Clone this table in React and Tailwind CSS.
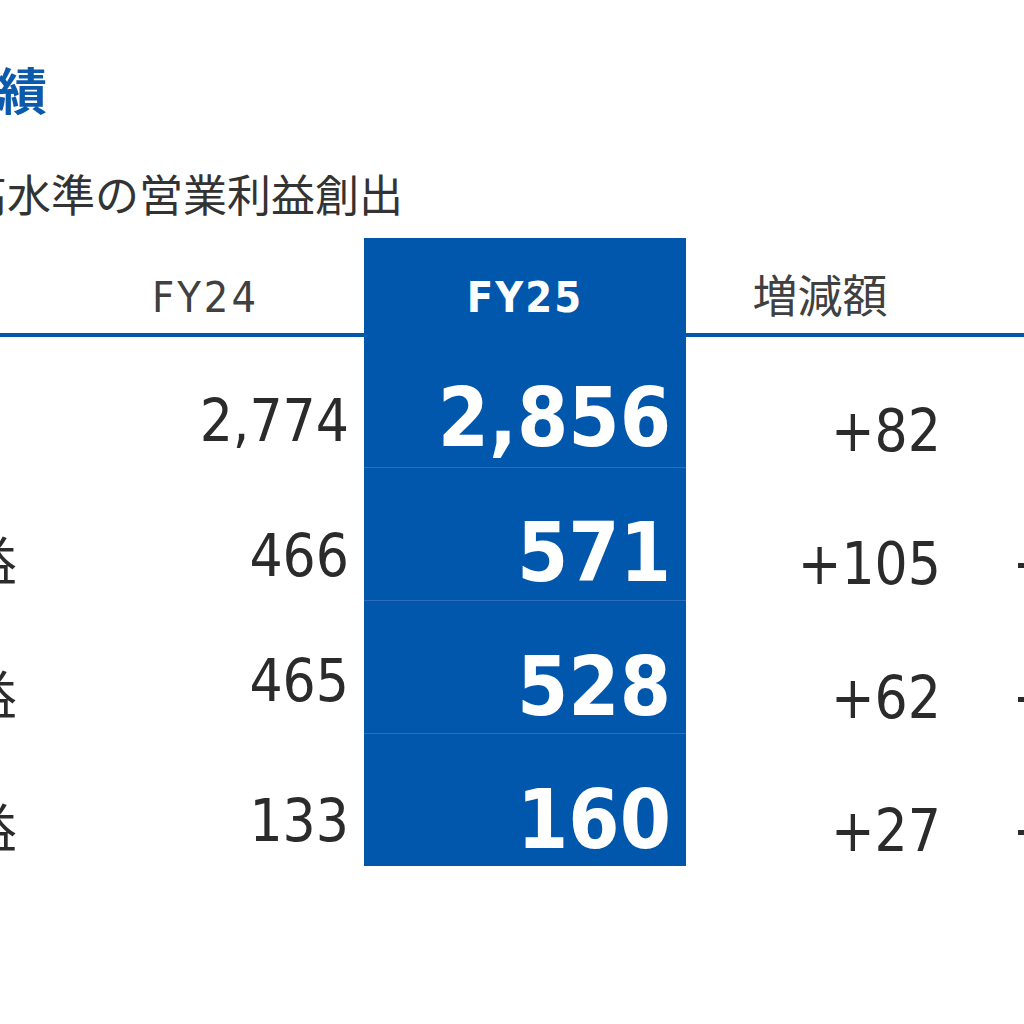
import React from 'react';

const rows = [
    { label: '売上高', fy24: '2,774', fy25: '2,856', diff: '+82', pct: '+3.0%', h: 'h-[131px]', lp: 'pt-[65px]', ap: 'pt-[55px]', bp: 'pt-[40px]', cp: 'pt-[65px]', sep: true },
    { label: '営業利益', fy24: '466', fy25: '571', diff: '+105', pct: '+22.5%', h: 'h-[133px]', lp: 'pt-[65px]', ap: 'pt-[59px]', bp: 'pt-[44px]', cp: 'pt-[67px]', sep: true },
    { label: '税前利益', fy24: '465', fy25: '528', diff: '+62', pct: '+13.5%', h: 'h-[133px]', lp: 'pt-[66px]', ap: 'pt-[51px]', bp: 'pt-[45px]', cp: 'pt-[68px]', sep: true },
    { label: '当期利益', fy24: '133', fy25: '160', diff: '+27', pct: '+20.3%', h: 'h-[132px]', lp: 'pt-[66px]', ap: 'pt-[58px]', bp: 'pt-[45px]', cp: 'pt-[68px]', sep: false },
];

const num = "font-['DejaVu_Sans_Condensed','Noto_Sans',sans-serif]";
const jp = "font-['Noto_Sans_CJK_JP',sans-serif]";

export default function App() {
    return (
        <div className="w-[1024px] h-[1024px] overflow-hidden bg-white">
            <div className="-ml-[200px] w-[1424px]">
                {/* Title */}
                <div className={`pt-[63px] pl-[47px] text-[50px] leading-none font-bold text-[#0b5aac] whitespace-nowrap ${jp}`}>
                    連結業績
                </div>
                <div className={`mt-[58px] pl-[31px] text-[44px] leading-none text-[#333] whitespace-nowrap ${jp}`}>
                    過去最高水準の営業利益創出
                </div>

                {/* Table */}
                <div className="mt-[23px] grid grid-cols-[564px_322px_268px_270px] text-[#2b2b2b]">
                    {/* header */}
                    <div className="h-[99px] border-b-4 border-[#0057ab] flex justify-end">
                        <div className={`pt-[38px] pr-[105px] text-[43px] leading-none tracking-[3px] text-[#404040] ${num}`}>FY24</div>
                    </div>
                    <div className="h-[99px] bg-[#0057ab] flex justify-center">
                        <div className={`pt-[38px] text-[43px] leading-none font-bold tracking-[2px] text-white ${num}`}>FY25</div>
                    </div>
                    <div className="h-[99px] border-b-4 border-[#0057ab] flex justify-center">
                        <div className={`pt-[33px] text-[45px] leading-none text-[#404040] ${jp}`}>増減額</div>
                    </div>
                    <div className="h-[99px] border-b-4 border-[#0057ab]"></div>

                    {rows.map((r) => (
                        <React.Fragment key={r.label}>
                            <div className={`${r.h} flex justify-between`}>
                                <div className={`${r.lp} pl-[9px] text-[52px] leading-none whitespace-nowrap ${jp}`}>{r.label}</div>
                                <div className={`${r.ap} pr-[15px] text-[58px] leading-none ${num}`}>{r.fy24}</div>
                            </div>
                            <div className={`${r.h} bg-[#0057ab] flex justify-end ${r.sep ? 'border-b border-[#2d6dba]' : ''}`}>
                                <div className={`${r.bp} pr-[15px] text-[82px] leading-none font-bold text-white ${num}`}>{r.fy25}</div>
                            </div>
                            <div className={`${r.h} flex justify-end`}>
                                <div className={`${r.cp} pr-[13px] text-[58px] leading-none ${num}`}>{r.diff}</div>
                            </div>
                            <div className={`${r.h} flex justify-end`}>
                                <div className={`${r.cp} pr-[2px] text-[58px] leading-none whitespace-nowrap ${num}`}>{r.pct}</div>
                            </div>
                        </React.Fragment>
                    ))}
                </div>
            </div>
        </div>
    );
}
